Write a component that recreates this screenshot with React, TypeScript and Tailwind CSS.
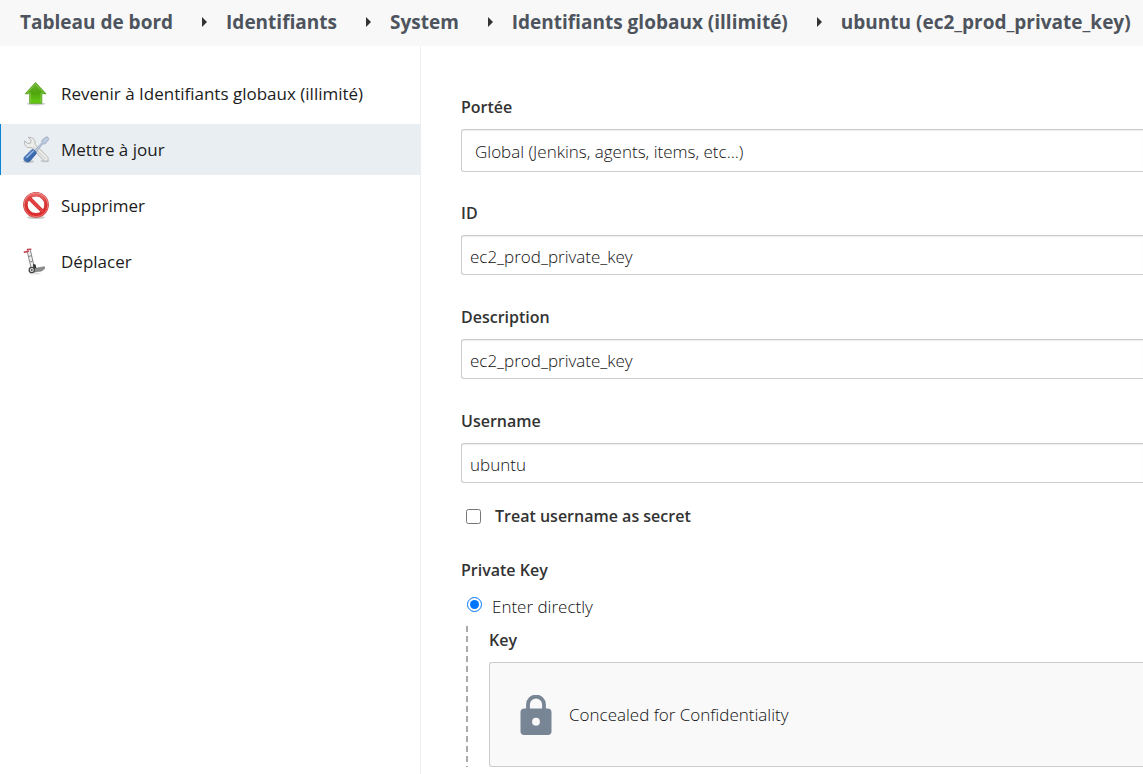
import type { ReactNode } from "react";

const crumbs = [
  "Tableau de bord",
  "Identifiants",
  "System",
  "Identifiants globaux (illimité)",
  "ubuntu (ec2_prod_private_key)",
];

function UpIcon() {
  return (
    <svg width="28" height="28" viewBox="0 0 28 28" aria-hidden="true">
      <defs>
        <linearGradient id="up" x1="0" y1="0" x2="0" y2="1">
          <stop offset="0" stopColor="#6fb535" />
          <stop offset="0.5" stopColor="#4fa50c" />
          <stop offset="1" stopColor="#66cc12" />
        </linearGradient>
      </defs>
      <ellipse cx="14" cy="23.8" rx="9.5" ry="1.6" fill="#000" opacity="0.18" />
      <path d="M13.5 2.5 24 13.7h-4.2v9.6H7.7v-9.6H3.3z" fill="url(#up)" stroke="#4c9a12" strokeWidth="0.8" strokeLinejoin="round" />
      <path d="M13.5 4 22 13h-3v9.5" fill="none" stroke="#a5dc74" strokeWidth="0.7" opacity="0.7" />
      <path d="M13.5 4 5 13h3.6v9.5" fill="none" stroke="#a5dc74" strokeWidth="0.7" opacity="0.7" />
    </svg>
  );
}

function ToolsIcon() {
  return (
    <svg width="28" height="28" viewBox="0 0 28 28" aria-hidden="true">
      <defs>
        <linearGradient id="grip" x1="0" y1="0" x2="1" y2="1">
          <stop offset="0" stopColor="#7ea6dc" />
          <stop offset="0.5" stopColor="#3f70b5" />
          <stop offset="1" stopColor="#274f8c" />
        </linearGradient>
      </defs>
      <ellipse cx="6.5" cy="25.6" rx="5.5" ry="1.4" fill="#000" opacity="0.18" />
      <ellipse cx="23" cy="25" rx="4.5" ry="1.3" fill="#000" opacity="0.15" />
      <path d="M6.2 1.3 9 4.2 8.6 7 5.6 7.5 2.7 4.9C1.9 8.2 3.6 11 6.5 11.6c1.2.2 2 .1 2.8-.2L21.6 24.4c1.1 1.1 2.9 1.1 3.9 0s.9-2.7-.1-3.8L12.9 8.3c.9-3.4-1.2-7.3-6.7-7z" fill="#ececea" stroke="#adafaf" strokeWidth="0.9" strokeLinejoin="round" />
      <path d="m11 10.5 12.5 12.5" stroke="#d4d5d4" strokeWidth="1.2" />
      <path d="m12.8 14.2 7-7.4.2-2.6 3.9-3.1c1.5-.8 3.3.9 2.7 2.5l-3.4 4.2-2.7.2-6 7.9z" fill="#bccbe0" stroke="#96a5b9" strokeWidth="0.8" strokeLinejoin="round" />
      <path d="M2.5 21 9.8 13.7c1.3-1 5.2 2.5 4.4 4L7.8 25.2c-3 2.3-7.5-1.3-5.3-4.2z" fill="url(#grip)" stroke="#3a66a6" strokeWidth="0.8" />
      <path d="m4.7 21.5 6.6-6.3" stroke="#a9c4ea" strokeWidth="1.1" strokeLinecap="round" />
    </svg>
  );
}

function DeleteIcon() {
  return (
    <svg width="28" height="28" viewBox="0 0 28 28" aria-hidden="true">
      <defs>
        <linearGradient id="stop" x1="0" y1="0" x2="0" y2="1">
          <stop offset="0" stopColor="#e96a6a" />
          <stop offset="0.5" stopColor="#d83232" />
          <stop offset="1" stopColor="#e02b2b" />
        </linearGradient>
      </defs>
      <ellipse cx="14" cy="25.5" rx="9" ry="1.6" fill="#000" opacity="0.2" />
      <circle cx="14" cy="12.8" r="10.6" fill="#fff" stroke="#c94a4a" strokeWidth="4.6" />
      <circle cx="14" cy="12.8" r="10.6" fill="none" stroke="url(#stop)" strokeWidth="3.6" />
      <path d="m6.8 5.6 14.4 14.4" stroke="#c93333" strokeWidth="3.8" />
      <path d="m6.8 5.6 14.4 14.4" stroke="#e34040" strokeWidth="2.8" />
      <circle cx="14" cy="12.8" r="11.9" fill="none" stroke="#f4a3a3" strokeWidth="0.7" opacity="0.9" />
    </svg>
  );
}

function MoveIcon() {
  return (
    <svg width="28" height="28" viewBox="0 0 28 28" aria-hidden="true">
      <ellipse cx="13" cy="25.6" rx="6" ry="1" fill="#000" opacity="0.12" />
      <path d="m5.5 4.2 4 17M8.300 2.300l3.500 15 1 3.700" fill="none" stroke="#8f8f8f" strokeWidth="1.2" />
      <path d="m7 4 3.7 16" stroke="#ececec" strokeWidth="1.8" />
      <path d="m6.7 8.500 2.700-.8M8 14l2.700-.7" stroke="#777" strokeWidth="0.9" />
      <path d="m2.400 4.100 3.800-.7M5.500 1.600l3.300-.4" stroke="#c94a58" strokeWidth="1.6" strokeLinecap="round" />
      <path d="m11 16 2.500.5 1 4-3 1z" fill="#333" />
      <path d="m12.500 20.500 9.900-1.800.2 2-3.100 2.300-7 1z" fill="#8c8e8e" stroke="#6c6e6e" strokeWidth="0.6" />
      <circle cx="9.800" cy="22" r="2.600" fill="#eee" stroke="#444" strokeWidth="1.3" />
      <circle cx="9.800" cy="22" r="0.900" fill="#444" />
    </svg>
  );
}

function LockIcon() {
  return (
    <svg width="32" height="40" viewBox="0 0 32 40" aria-hidden="true" className="shrink-0">
      <path d="M8 15V9.500a8 8 0 0 1 16 0V15" fill="none" stroke="#788594" strokeWidth="3.8" />
      <rect x="0.5" y="13.5" width="31" height="26.5" rx="3.8" fill="#788594" />
      <circle cx="16" cy="26.7" r="3.9" fill="#f9f9f9" />
    </svg>
  );
}

const tasks: { label: string; icon: ReactNode; active?: boolean }[] = [
  { label: "Revenir à Identifiants globaux (illimité)", icon: <UpIcon /> },
  { label: "Mettre à jour", icon: <ToolsIcon />, active: true },
  { label: "Supprimer", icon: <DeleteIcon /> },
  { label: "Déplacer", icon: <MoveIcon /> },
];

function TextField({ id, label, value }: { id: string; label: string; value: string }) {
  return (
    <div className="mb-[30px] flex flex-col gap-2.5">
      <label htmlFor={id} className="text-base leading-6 font-semibold">{label}</label>
      <input
        id={id}
        type="text"
        defaultValue={value}
        className="h-10 w-full rounded-l-[3px] border border-r-0 border-[#ccc] bg-white px-2 pt-0.5 font-light text-[#111] shadow-[inset_0_1px_1px_rgba(0,0,0,0.075)]"
      />
    </div>
  );
}

export default function App() {
  return (
    <div className="flex min-h-screen flex-col overflow-x-hidden bg-white font-['Open_Sans','Noto_Sans',sans-serif] text-[17px] text-[#333]">
      <nav aria-label="Fil d'Ariane" className="h-[46px] shrink-0 bg-[#f8f8f8] pl-5">
        <ol className="flex h-11 items-center whitespace-nowrap text-[19px] font-bold text-[#4d545d]">
          {crumbs.map((crumb, i) => (
            <li key={crumb} className="flex items-center">
              {i > 0 && (
                <svg width="5" height="10" viewBox="0 0 5 10" aria-hidden="true" className="mr-[19px] ml-[29px]">
                  <path d="M0 0v10l5-5z" fill="#333" />
                </svg>
              )}
              <a href="#">{crumb}</a>
            </li>
          ))}
        </ol>
      </nav>
      <div className="flex flex-1">
        <aside className="w-[421px] shrink-0 border-r border-[#eaeff2] pt-[22px] text-[#1c1c1c]">
          <ul className="flex flex-col gap-[5px]">
            {tasks.map((task) => (
              <li key={task.label}>
                <a
                  href="#"
                  aria-current={task.active ? "page" : undefined}
                  className={
                    task.active
                      ? "flex h-[51px] items-center gap-[11px] border-l border-[#0b84d8] bg-[#e9eef2] pl-[21px]"
                      : "flex h-[51px] items-center gap-[11px] border-l border-transparent pl-[21px]"
                  }
                >
                  {task.icon}
                  <span>{task.label}</span>
                </a>
              </li>
            ))}
          </ul>
        </aside>
        <main className="min-w-0 flex-1 pt-[49px] pb-[7px] pl-10">
          <form>
            <div className="mb-[29px] flex flex-col gap-2.5">
              <label htmlFor="scope" className="text-base leading-6 font-semibold">Portée</label>
              <select
                id="scope"
                className="h-[43px] w-full appearance-none rounded-l-[3px] border border-r-0 border-[#ccc] bg-white px-[13px] pt-0.5 font-light text-[#111] shadow-[inset_0_1px_1px_rgba(0,0,0,0.075)]"
              >
                <option>Global (Jenkins, agents, items, etc...)</option>
              </select>
            </div>
            <TextField id="cred-id" label="ID" value="ec2_prod_private_key" />
            <TextField id="description" label="Description" value="ec2_prod_private_key" />
            <TextField id="username" label="Username" value="ubuntu" />
            <div className="-mt-[9px] flex h-6 items-center gap-3.5 pl-[5px]">
              <input id="secret" type="checkbox" className="size-[15px]" />
              <label htmlFor="secret" className="text-base leading-6 font-semibold">Treat username as secret</label>
            </div>
            <fieldset className="pt-[29px]">
              <legend className="contents text-base leading-6 font-semibold">Private Key</legend>
              <div className="mt-3 flex h-6 items-start gap-2.5 pl-1.5">
                <input id="direct" type="radio" name="key-source" defaultChecked className="mt-0.5 size-[15px] accent-[#0075ff]" />
                <label htmlFor="direct" className="leading-6 font-light text-[#111]">Enter directly</label>
              </div>
              <div className="mt-[7px] ml-[5px] flex gap-[21px]">
                <div className="w-0.5 bg-[repeating-linear-gradient(to_bottom,#aaa_0px,#aaa_6px,transparent_6px,transparent_10px)]" />
                <div className="flex min-w-0 flex-1 flex-col gap-2.5 pt-0.5">
                  <h3 className="text-base leading-6 font-semibold">Key</h3>
                  <div className="flex h-[105px] items-center gap-[17px] rounded-l-[3px] border border-r-0 border-[#ccc] bg-[#f9f9f9] pt-0.5 pl-[30px]">
                    <LockIcon />
                    <span className="font-light text-[#111]">Concealed for Confidentiality</span>
                  </div>
                </div>
              </div>
            </fieldset>
          </form>
        </main>
      </div>
    </div>
  );
}
